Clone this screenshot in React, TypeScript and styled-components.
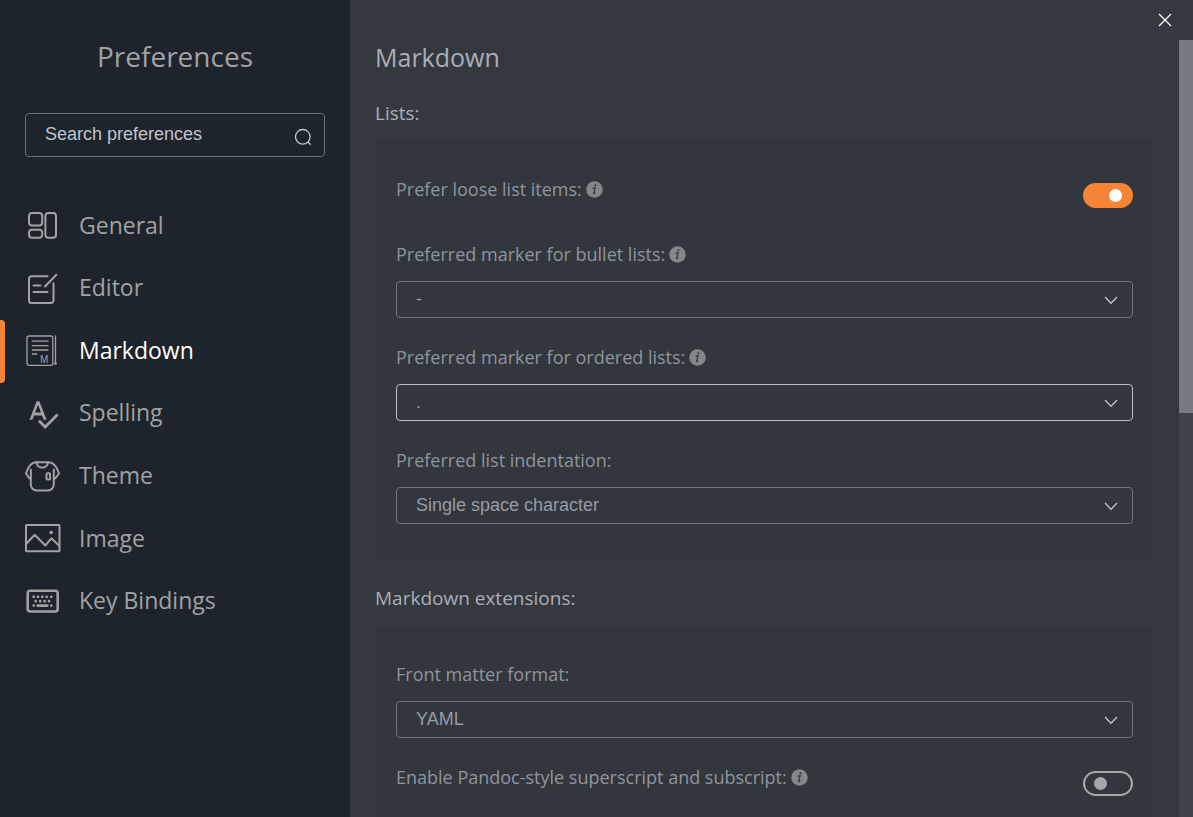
import React, { useId, useState } from "react";
import styled, { createGlobalStyle } from "styled-components";
import { MdSpellcheck } from "react-icons/md";

const GlobalStyle = createGlobalStyle`
  *, *::before, *::after { box-sizing: border-box; }
  body {
    margin: 0;
    background: #34383f;
    font-family: "Open Sans", "Noto Sans", sans-serif;
  }
`;

const Window = styled.div`
  display: flex;
  height: 100vh;
  overflow: hidden;
`;

const Sidebar = styled.aside`
  flex: 0 0 350px;
  padding: 37px 25px 0;
  background: #1d242b;
  color: #a0a2a4;
`;

const SidebarTitle = styled.h2`
  margin: 0 0 38px;
  font-size: 28px;
  line-height: 38px;
  font-weight: 400;
  text-align: center;
`;

const SearchBox = styled.label`
  display: flex;
  align-items: center;
  height: 44px;
  padding: 0 12px 0 19px;
  border: 1px solid #6b717a;
  border-radius: 4px;
  color: #c0c4cc;
`;

const SearchInput = styled.input`
  flex: 1;
  min-width: 0;
  height: 40px;
  padding: 0 0 2px;
  border: 0;
  outline: 0;
  background: transparent;
  color: inherit;
  font-family: "Liberation Sans", Arial, sans-serif;
  font-size: 18px;
  &::placeholder { color: #c0c4cc; opacity: 1; }
`;

const SearchGlyph = styled.svg`
  width: 18px;
  height: 18px;
  margin-top: 4px;
  fill: none;
  stroke: currentColor;
`;

const Nav = styled.nav`
  display: grid;
  grid-auto-rows: 1fr;
  height: 438px;
  margin: 38px -25px 0;
`;

const NavItem = styled.a<{ $active?: boolean }>`
  position: relative;
  display: flex;
  align-items: center;
  gap: 18px;
  padding-left: 25px;
  color: ${(p) => (p.$active ? "#ffffff" : "#a0a2a4")};
  font-size: 23px;
  line-height: 32px;
  text-decoration: none;
  &::before {
    content: "";
    display: ${(p) => (p.$active ? "block" : "none")};
    position: absolute;
    top: 0;
    bottom: 0;
    left: 0;
    width: 5px;
    border-radius: 0 4px 4px 0;
    background: #f68437;
  }
`;

const NavLabel = styled.span`
  padding-bottom: 3px;
`;

const NavIcon = styled.svg`
  flex: none;
  width: 36px;
  height: 36px;
  fill: none;
  stroke: #a0a2a4;
  stroke-width: 2;
  stroke-linecap: round;
  stroke-linejoin: round;
`;

const SpellIcon = styled(MdSpellcheck)`
  flex: none;
  width: 36px;
  height: 34px;
  color: #a0a2a4;
`;

const Main = styled.main`
  flex: 1;
  min-width: 0;
  display: flex;
  flex-direction: column;
  background: #34383f;
`;

const TitleBar = styled.header`
  flex: 0 0 40px;
  display: flex;
  justify-content: flex-end;
`;

const CloseButton = styled.button`
  display: grid;
  place-items: center;
  width: 56px;
  height: 40px;
  padding: 0;
  border: 0;
  background: transparent;
  color: #ffffff;
`;

const Body = styled.div`
  flex: 1;
  min-height: 0;
  display: flex;
`;

const Content = styled.div`
  flex: 1;
  min-width: 0;
  padding: 0 25px 24px;
  overflow-y: auto;
  scrollbar-width: none;
  color: #a9afbb;
`;

const ScrollTrack = styled.div`
  flex: 0 0 14px;
  background: #3f4249;
`;

const ScrollThumb = styled.div`
  height: 48%;
  background: #777a84;
`;

const PageTitle = styled.h1`
  margin: 0 0 26px;
  font-size: 25px;
  line-height: 34px;
  font-weight: 400;
`;

const SectionTitle = styled.h2`
  margin: 0 0 13px;
  font-size: 19px;
  line-height: 26px;
  font-weight: 400;
`;

const Card = styled.div`
  display: flex;
  flex-direction: column;
  gap: 27px;
  margin-bottom: 24px;
  padding: 37px 20px 36px;
  border: 1px solid #393c43;
  background: #32363d;
`;

const Field = styled.div`
  display: flex;
  flex-direction: column;
  gap: 15px;
`;

const SwitchRow = styled.div`
  display: flex;
  justify-content: space-between;
  height: 38px;
`;

const Caption = styled.div`
  display: flex;
  align-items: center;
  gap: 4px;
  height: 24px;
  font-size: 18px;
  line-height: 24px;
  color: #8e959f;
`;

const InfoGlyph = styled.svg`
  flex: none;
  width: 17px;
  height: 17px;
`;

const SelectBox = styled.div`
  display: grid;
  align-items: center;
`;

const Select = styled.select<{ $focused?: boolean }>`
  grid-area: 1 / 1;
  appearance: none;
  width: 100%;
  height: 37px;
  padding: 0 40px 2px 19px;
  border: 1px solid ${(p) => (p.$focused ? "#b9bdc5" : "#70747c")};
  border-radius: 4px;
  outline: 0;
  background: transparent;
  color: #969ca6;
  font-family: "Liberation Sans", Arial, sans-serif;
  font-size: 18px;
`;

const Chevron = styled.svg`
  grid-area: 1 / 1;
  justify-self: end;
  width: 14px;
  height: 9px;
  margin: 1px 15px 0 0;
  fill: none;
  stroke: #c0c4cc;
  pointer-events: none;
`;

const Switch = styled.input`
  appearance: none;
  display: flex;
  align-items: center;
  flex: none;
  width: 50px;
  height: 25px;
  margin: 6px 0 0;
  padding: 0 9px;
  border: 2px solid #a6a7aa;
  border-radius: 13px;
  background: transparent;
  &::before {
    content: "";
    width: 13px;
    height: 13px;
    border-radius: 50%;
    background: #a6a7aa;
  }
  &:checked {
    justify-content: flex-end;
    border-color: #f68437;
    background: #f68437;
  }
  &:checked::before { background: #ffffff; }
`;

function InfoIcon() {
  return (
    <InfoGlyph viewBox="0 0 17 17" aria-hidden="true">
      <circle cx="8.5" cy="8.5" r="8.3" fill="#858689" />
      <circle cx="9.4" cy="4.3" r="1.1" fill="#32363d" />
      <path d="M6.6 7.2l2.5-.4-1.4 5.4c-.2.8.4.6 1.5-.5" fill="none" stroke="#32363d" strokeWidth="1.2" />
    </InfoGlyph>
  );
}

interface SelectFieldProps {
  label: string;
  options: string[];
  info?: boolean;
  focused?: boolean;
}

function SelectField({ label, options, info, focused }: SelectFieldProps) {
  const id = useId();
  return (
    <Field>
      <Caption>
        <label htmlFor={id}>{label}</label>
        {info && <InfoIcon />}
      </Caption>
      <SelectBox>
        <Select id={id} $focused={focused} defaultValue={options[0]}>
          {options.map((o) => (
            <option key={o}>{o}</option>
          ))}
        </Select>
        <Chevron viewBox="0 0 14 9" aria-hidden="true">
          <path d="M1 1l6 6.3L13 1" strokeWidth="1.3" />
        </Chevron>
      </SelectBox>
    </Field>
  );
}

function SwitchField({ label, initial }: { label: string; initial: boolean }) {
  const id = useId();
  const [on, setOn] = useState(initial);
  return (
    <SwitchRow>
      <Caption>
        <label htmlFor={id}>{label}</label>
        <InfoIcon />
      </Caption>
      <Switch id={id} type="checkbox" checked={on} onChange={() => setOn(!on)} />
    </SwitchRow>
  );
}

const navItems: { name: string; icon: React.ReactNode }[] = [
  {
    name: "General",
    icon: (
      <NavIcon viewBox="0 0 36 36">
        <rect x="4" y="5" width="13.2" height="12.6" rx="3" />
        <rect x="4" y="21.8" width="13.2" height="8" rx="3" />
        <rect x="20.4" y="5" width="10.6" height="24.8" rx="3" />
      </NavIcon>
    ),
  },
  {
    name: "Editor",
    icon: (
      <NavIcon viewBox="0 0 36 36">
        <path d="M22.5 5.3H6.5a2.5 2.5 0 0 0-2.5 2.5V29.5a2.5 2.5 0 0 0 2.5 2.5H26a2.5 2.5 0 0 0 2.5-2.5V12.2" />
        <path d="M20 15.5L31.3 3.8M8.5 14.4H15.5M8.5 21H22.5" />
      </NavIcon>
    ),
  },
  {
    name: "Markdown",
    icon: (
      <NavIcon viewBox="0 0 36 36">
        <g strokeWidth="1.3">
          <rect x="2" y="3" width="25.8" height="29.3" rx="2" />
          <path d="M30.5 3V31M7.3 8.2H23M7.3 12.7H23M7.3 17H23M7.3 21H11.7" />
        </g>
        <path d="M30 30.5h1" />
        <text x="15" y="30" fontSize="10" fontFamily="Liberation Sans, Arial, sans-serif" fill="#a0a2a4" stroke="none">
          M
        </text>
      </NavIcon>
    ),
  },
  { name: "Spelling", icon: <SpellIcon /> },
  {
    name: "Theme",
    icon: (
      <NavIcon viewBox="0 0 36 36">
        <path d="M5.8 10.5V25.5a6 6 0 0 0 6 6H22.8a6 6 0 0 0 6-6V10.5" />
        <path d="M5.8 19.5H4.5L1 14.5C2.5 9.5 5.5 3.2 11 3.2H23.5C29 3.2 32.5 9.5 34 14.5L30.2 19.5H28.8" />
        <path d="M11.5 3.2C12 10.2 22.5 10.2 23 3.2" />
        <rect x="21.5" y="14.2" width="3.6" height="6.2" rx="1" />
      </NavIcon>
    ),
  },
  {
    name: "Image",
    icon: (
      <NavIcon viewBox="0 0 36 36">
        <rect x="1" y="4" width="33.5" height="26.2" rx=".5" />
        <path d="M1.5 22.5L9.7 13.7L20.3 24.5L26.3 17.3L34 24.5" />
        <circle cx="26.2" cy="11.5" r="1.8" fill="#a0a2a4" stroke="none" />
      </NavIcon>
    ),
  },
  {
    name: "Key Bindings",
    icon: (
      <NavIcon viewBox="0 0 36 36">
        <rect x="2.7" y="6.7" width="30" height="20.8" rx="2.5" strokeWidth="2.6" />
        <path
          d="M8.7 12.8h.01M13 12.8h.01M17.3 12.8h.01M21.7 12.8h.01M26.3 12.8h.01M10.7 17.2h.01M15.2 17.2h.01M19.6 17.2h.01M24 17.2h.01M8.7 21.6h.01M12.7 21.6H22.3M26.3 21.6h.01"
          strokeWidth="2.8"
        />
      </NavIcon>
    ),
  },
];

export default function App() {
  return (
    <>
      <GlobalStyle />
      <Window>
        <Sidebar>
          <SidebarTitle>Preferences</SidebarTitle>
          <SearchBox>
            <SearchInput type="text" placeholder="Search preferences" aria-label="Search preferences" />
            <SearchGlyph viewBox="0 0 18 18" aria-hidden="true">
              <circle cx="8.8" cy="8.8" r="7.3" strokeWidth="1.3" />
              <path d="M14 14l2.7 2.7" strokeWidth="1.3" />
            </SearchGlyph>
          </SearchBox>
          <Nav>
            {navItems.map(({ name, icon }) => (
              <NavItem key={name} href={`#${name.toLowerCase().replace(" ", "-")}`} $active={name === "Markdown"}>
                {icon}
                <NavLabel>{name}</NavLabel>
              </NavItem>
            ))}
          </Nav>
        </Sidebar>
        <Main>
          <TitleBar>
            <CloseButton type="button" aria-label="Close">
              <svg width="14" height="14" viewBox="0 0 14 14" fill="none" stroke="currentColor" strokeWidth="1.3">
                <path d="M1 1L13 13M13 1L1 13" />
              </svg>
            </CloseButton>
          </TitleBar>
          <Body>
            <Content>
              <PageTitle>Markdown</PageTitle>
              <SectionTitle>Lists:</SectionTitle>
              <Card>
                <SwitchField label="Prefer loose list items:" initial />
                <SelectField label="Preferred marker for bullet lists:" options={["-", "*", "+"]} info />
                <SelectField label="Preferred marker for ordered lists:" options={[".", ")"]} info focused />
                <SelectField
                  label="Preferred list indentation:"
                  options={["Single space character", "Two spaces", "Three spaces", "Four spaces"]}
                />
              </Card>
              <SectionTitle>Markdown extensions:</SectionTitle>
              <Card>
                <SelectField label="Front matter format:" options={["YAML", "TOML", "JSON"]} />
                <SwitchField label="Enable Pandoc-style superscript and subscript:" initial={false} />
              </Card>
            </Content>
            <ScrollTrack>
              <ScrollThumb />
            </ScrollTrack>
          </Body>
        </Main>
      </Window>
    </>
  );
}
